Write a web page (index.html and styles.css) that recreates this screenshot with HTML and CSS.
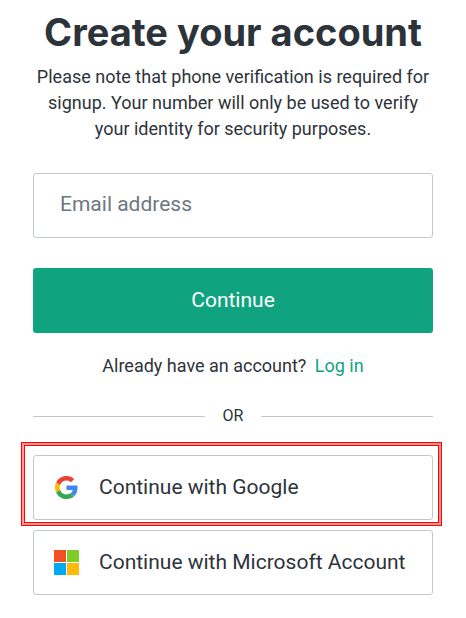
FILE: index.html
```html
<!DOCTYPE html>
<html lang="en">
<head>
  <meta charset="UTF-8" />
  <meta name="viewport" content="width=device-width, initial-scale=1.0"/>
  <title>Create your account</title>
  <link rel="stylesheet" href="styles.css">
</head>
<body>
  <main class="signup">
    <h1>Create your account</h1>
    <p class="note">Please note that phone verification is required for signup. Your number will only be used to verify your identity for security purposes.</p>

    <form class="email-form">
      <input type="email" class="field" placeholder="Email address" aria-label="Email address">
      <button type="submit" class="continue">Continue</button>
    </form>

    <p class="login">Already have an account? <a href="#">Log in</a></p>

    <div class="divider">OR</div>

    <div class="providers">
      <button type="button" class="provider highlighted">
        <svg class="icon" viewBox="-2 -2 52 52" aria-hidden="true">
          <path fill="#EA4335" d="M24 9.5c3.54 0 6.71 1.22 9.21 3.6l6.85-6.85C35.9 2.38 30.47 0 24 0 14.62 0 6.51 5.38 2.56 13.22l7.98 6.19C12.43 13.72 17.74 9.5 24 9.5z"/>
          <path fill="#4285F4" d="M46.98 24.55c0-1.57-.15-3.09-.38-4.55H24v9.02h12.94c-.58 2.96-2.26 5.48-4.78 7.18l7.73 6c4.51-4.18 7.09-10.36 7.09-17.65z"/>
          <path fill="#FBBC05" d="M10.53 28.59c-.48-1.45-.76-2.99-.76-4.59s.27-3.14.76-4.59l-7.98-6.19C.92 16.46 0 20.12 0 24c0 3.88.92 7.54 2.56 10.78l7.97-6.19z"/>
          <path fill="#34A853" d="M24 48c6.48 0 11.93-2.13 15.89-5.81l-7.73-6c-2.15 1.45-4.92 2.3-8.16 2.3-6.26 0-11.57-4.22-13.47-9.91l-7.98 6.19C6.51 42.62 14.62 48 24 48z"/>
        </svg>
        <span class="label">Continue with Google</span>
      </button>
      <button type="button" class="provider">
        <svg class="icon" viewBox="0 0 25 25" aria-hidden="true">
          <path fill="#F25022" d="M0 0h12v12H0z"/>
          <path fill="#7FCC28" d="M13 0h12v12H13z"/>
          <path fill="#00AAF2" d="M0 13h12v12H0z"/>
          <path fill="#FFBB08" d="M13 13h12v12H13z"/>
        </svg>
        <span class="label">Continue with Microsoft Account</span>
      </button>
    </div>
  </main>
</body>
</html>
```

FILE: styles.css
```css
* {
  box-sizing: border-box;
}

body {
  margin: 0;
  background: #fff;
  color: #2d333a;
  font-family: Roboto, "Liberation Sans", sans-serif;
  font-size: 18px;
  line-height: 26px;
}

.signup {
  max-width: 466px;
  margin: 0 auto;
  padding: 8px 33px 22px;
  text-align: center;
}

h1 {
  margin: 0 -4px 8px;
  font-family: Inter, Roboto, sans-serif;
  font-size: 38px;
  line-height: 48px;
}

.note {
  margin: 0 -4px 31px;
}

.email-form {
  display: grid;
  gap: 30px;
}

.field,
.continue,
.provider {
  width: 100%;
  height: 65px;
  border-radius: 3px;
  font-family: inherit;
  font-size: 21px;
}

.field {
  padding: 0 26px 4px;
  border: 1px solid #c2c8d0;
  color: #2d333a;
}

.field::placeholder {
  color: #6e7780;
}

.continue {
  padding-bottom: 2px;
  border: none;
  background: #10a37f;
  color: #fff;
}

.login {
  margin: 20px 0 24px;
}

.login a {
  margin-left: 4px;
  color: #10a37f;
  text-decoration: none;
}

.divider {
  display: flex;
  align-items: center;
  gap: 18px;
  margin-bottom: 26px;
  font-size: 16px;
}

.divider::before,
.divider::after {
  content: "";
  flex: 1;
  height: 1px;
  background: #c2c8d0;
}

.providers {
  display: grid;
  gap: 10px;
}

.provider {
  position: relative;
  display: flex;
  align-items: center;
  gap: 20px;
  padding: 0 20px;
  border: 1px solid #c2c8d0;
  background: #fff;
  color: #2d333a;
}

.icon {
  width: 25px;
  height: 25px;
}

.label {
  padding-bottom: 2px;
}

/* double red frame round the suggested option */
.highlighted::after {
  content: "";
  position: absolute;
  inset: -14px -10px -7px -13px;
  border: 1px solid #f00;
  outline: 1px solid #f00;
  outline-offset: -4px;
  box-shadow: inset 0 0 0 2px #ff9a9a;
}
```
